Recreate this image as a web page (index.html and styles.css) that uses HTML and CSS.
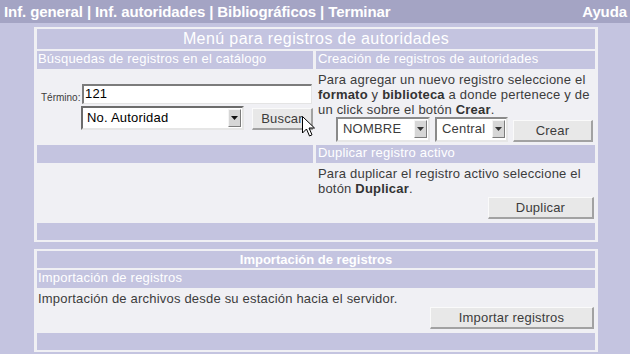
FILE: index.html
```html
<!DOCTYPE html>
<html lang="es">
<head>
<meta charset="utf-8">
<title>Menú para registros de autoridades</title>
<link rel="stylesheet" href="styles.css">
</head>
<body>
<header class="topbar">
  <nav class="topnav">Inf. general | Inf. autoridades | Bibliográficos | Terminar</nav>
  <span class="help">Ayuda</span>
</header>
<main class="page">
  <section class="panel panel-main">
    <div class="cell title span2">Menú para registros de autoridades</div>
    <div class="cell sub">Búsquedas de registros en el catálogo</div>
    <div class="cell sub right">Creación de registros de autoridades</div>
    <div class="content search-cell">
      <form class="search-form">
        <label class="term-label">Término:</label>
        <div class="textbox">121</div>
        <div class="select select-field"><span class="select-text">No. Autoridad</span><span class="arrow"><svg width="7" height="4" viewBox="0 0 7 4"><path d="M0 0h7L3.5 4z" fill="#111"/></svg></span></div>
        <div class="btn btn-search">Buscar</div>
      </form>
      <svg class="cursor" width="13" height="21" viewBox="0 0 13 21"><path d="M0.5 0.5v16.5l4-4 3 7 2.5-1.2-3-6.8h5.5z" fill="#fff" stroke="#000" stroke-width="1"/></svg>
    </div>
    <div class="content text-cell right">
      <p class="desc">Para agregar un nuevo registro seleccione el <b>formato</b> y <b>biblioteca</b> a donde pertenece y de un click sobre el botón <b>Crear</b>.</p>
      <div class="create-row">
        <div class="select select-format"><span class="select-text">NOMBRE</span><span class="arrow"><svg width="7" height="4" viewBox="0 0 7 4"><path d="M0 0h7L3.5 4z" fill="#333"/></svg></span></div>
        <div class="select select-lib"><span class="select-text">Central</span><span class="arrow"><svg width="7" height="4" viewBox="0 0 7 4"><path d="M0 0h7L3.5 4z" fill="#333"/></svg></span></div>
        <div class="btn btn-create">Crear</div>
      </div>
    </div>
    <div class="cell sub"></div>
    <div class="cell sub right">Duplicar registro activo</div>
    <div class="content"></div>
    <div class="content text-cell right dup-cell">
      <p class="desc">Para duplicar el registro activo seleccione el botón <b>Duplicar</b>.</p>
      <div class="btn btn-dup">Duplicar</div>
    </div>
    <div class="cell foot span2"></div>
  </section>

  <section class="panel panel-import">
    <div class="cell title title-small">Importación de registros</div>
    <div class="cell sub">Importación de registros</div>
    <div class="content text-cell import-cell">
      <p class="desc">Importación de archivos desde su estación hacia el servidor.</p>
      <div class="btn btn-import">Importar registros</div>
    </div>
    <div class="cell foot"></div>
  </section>
</main>
</body>
</html>
```

FILE: styles.css
```css
html, body {
  margin: 0;
  padding: 0;
}
body {
  background: #c4c4e0;
  font-family: "Liberation Sans", Arial, sans-serif;
  color: #3c3c3c;
  width: 630px;
  height: 354px;
  overflow: hidden;
}
.topbar {
  height: 23px;
  background: #a4a4c4;
  display: flex;
  justify-content: space-between;
  align-items: center;
  padding: 0 3px 0 4px;
  color: #fff;
  font-weight: bold;
  font-size: 15px;
  letter-spacing: -0.1px;
  line-height: 23px;
}
.page {
  padding: 4px 0 0 34px;
}
.panel {
  width: 558px;
  background: #f0f0f4;
  padding: 2px 3px;
  display: grid;
  row-gap: 2px;
}
.panel-main {
  grid-template-columns: 276px 279px;
  column-gap: 3px;
  grid-template-rows: 20px 18px 72px 18px 56px 17px;
}
.panel-import {
  margin-top: 7px;
  grid-template-columns: 558px;
  grid-template-rows: 17px 18px 41px 17px;
}
.span2 {
  grid-column: 1 / 3;
}
.cell {
  background: #c4c4e0;
  color: #fff;
}
.title {
  text-align: center;
  font-size: 16px;
  letter-spacing: 0.4px;
  line-height: 20px;
}
.title-small {
  font-size: 13px;
  font-weight: bold;
  letter-spacing: 0;
  line-height: 17px;
}
.sub {
  font-size: 13px;
  letter-spacing: 0.2px;
  line-height: 15px;
  padding-left: 1px;
}
.sub.right {
  padding-left: 2px;
}
.content {
  font-size: 13px;
  letter-spacing: 0.2px;
  line-height: 15px;
}
.text-cell {
  padding: 1px 0 0 1px;
  display: flex;
  flex-direction: column;
}
.text-cell.right {
  padding-left: 2px;
}
.desc {
  margin: 0;
}
.desc b {
  color: #333;
}

/* search form */
.search-cell {
  position: relative;
  display: flex;
  align-items: center;
}
.search-form {
  margin-left: 4px;
  display: grid;
  grid-template-columns: 40px 163px 69px;
  grid-template-rows: 20px 24px;
  row-gap: 2px;
}
.term-label {
  grid-row: 1;
  grid-column: 1;
  align-self: end;
  font-size: 10px;
  line-height: 12px;
  letter-spacing: 0;
  color: #3c3c3c;
}
.textbox {
  grid-row: 1;
  grid-column: 2 / 4;
  margin-left: 1px;
  margin-right: 1px;
  background: #fff;
  border-style: solid;
  border-width: 2px 1px 1px 2px;
  border-color: #7c7c7c #e4e4e4 #e4e4e4 #7c7c7c;
  color: #000;
  font-size: 13px;
  line-height: 16px;
  padding-left: 1px;
}
.select {
  box-sizing: border-box;
  background: #fff;
  border-style: solid;
  border-width: 2px;
  border-color: #8a8a8a #e6e6e6 #e6e6e6 #8a8a8a;
  display: flex;
  justify-content: space-between;
  align-items: flex-start;
}
.select-text {
  padding: 1px 0 0 5px;
  line-height: 15px;
}
.arrow {
  box-sizing: border-box;
  width: 13px;
  height: 18px;
  margin: 1px 1px 0 0;
  background: #d6d6d6;
  border-style: solid;
  border-width: 1px;
  border-color: #f4f4f4 #7c7c7c #7c7c7c #f4f4f4;
  display: flex;
  align-items: center;
  justify-content: center;
}
.select-field {
  grid-row: 2;
  grid-column: 2;
  border-color: #6c6c6c #e6e6e6 #e6e6e6 #6c6c6c;
  color: #000;
}
.select-field .select-text {
  padding-left: 4px;
  padding-top: 2px;
}
.btn {
  box-sizing: border-box;
  height: 22px;
  background: #e8e8e8;
  border-style: solid;
  border-width: 1px 2px 2px 1px;
  border-color: #fafafa #a2a2a2 #a2a2a2 #fafafa;
  color: #3c3c3c;
  font-size: 13px;
  letter-spacing: 0.2px;
  line-height: 19px;
  text-align: center;
}
.btn-search {
  grid-row: 2;
  grid-column: 3;
  justify-self: end;
  align-self: end;
  width: 61px;
}
.cursor {
  position: absolute;
  left: 265px;
  top: 45px;
}

/* create */
.create-row {
  display: flex;
  justify-content: flex-end;
  align-items: flex-end;
  padding-right: 2px;
  height: 25px;
}
.select-format {
  width: 94px;
  height: 25px;
  margin-right: 5px;
}
.select-lib {
  width: 73px;
  height: 25px;
  margin-right: 5px;
}
.select-format .select-text,
.select-lib .select-text {
  padding-top: 2px;
}
.btn-create {
  width: 80px;
}

/* duplicate */
.dup-cell .btn-dup {
  align-self: flex-end;
  margin-top: auto;
  margin-right: 1px;
  margin-bottom: 2px;
  width: 106px;
}
.import-cell .btn-import {
  align-self: flex-end;
  margin-top: auto;
  margin-right: 1px;
  margin-bottom: 2px;
  width: 164px;
}
.foot {
  height: 17px;
}
```
